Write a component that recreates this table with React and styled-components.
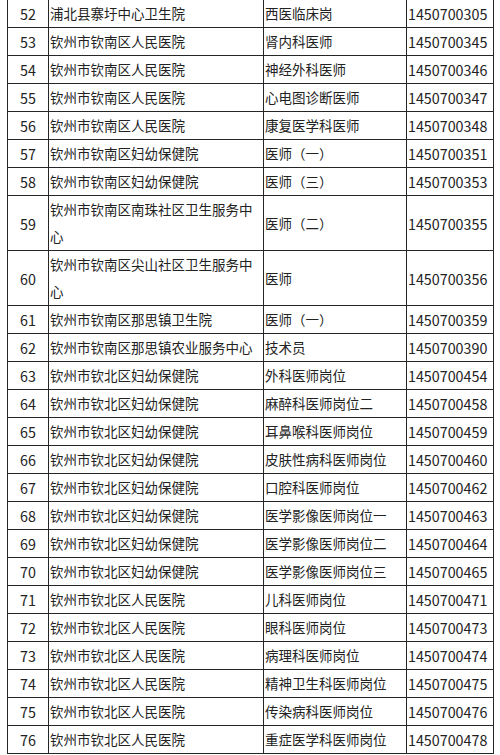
import React from "react";
import styled, { createGlobalStyle } from "styled-components";

const GlobalStyle = createGlobalStyle`
  html, body {
    margin: 0;
    padding: 0;
    background: #ffffff;
  }
  body {
    font-family: "Noto Sans CJK SC", "Noto Sans", sans-serif;
    color: #222222;
  }
`;

const Table = styled.table`
  margin-left: 7px;
  width: 486px;
  border-collapse: collapse;
  table-layout: fixed;
  font-size: 13.5px;
  line-height: 27px;
`;

const Col = styled.col`
  width: ${(p) => p.$w}px;
`;

const Row = styled.tr`
  &:first-child td {
    border-top: none;
  }
`;

const Cell = styled.td`
  border: 1px solid #262626;
  padding: 0 1px;
  vertical-align: middle;
  text-align: ${(p) => (p.$center ? "center" : "left")};
  font-size: ${(p) => (p.$num ? "14.3px" : "13.5px")};
  word-break: break-all;
`;

const rows = [
  ["52", "浦北县寨圩中心卫生院", "西医临床岗", "1450700305"],
  ["53", "钦州市钦南区人民医院", "肾内科医师", "1450700345"],
  ["54", "钦州市钦南区人民医院", "神经外科医师", "1450700346"],
  ["55", "钦州市钦南区人民医院", "心电图诊断医师", "1450700347"],
  ["56", "钦州市钦南区人民医院", "康复医学科医师", "1450700348"],
  ["57", "钦州市钦南区妇幼保健院", "医师（一）", "1450700351"],
  ["58", "钦州市钦南区妇幼保健院", "医师（三）", "1450700353"],
  ["59", "钦州市钦南区南珠社区卫生服务中心", "医师（二）", "1450700355"],
  ["60", "钦州市钦南区尖山社区卫生服务中心", "医师", "1450700356"],
  ["61", "钦州市钦南区那思镇卫生院", "医师（一）", "1450700359"],
  ["62", "钦州市钦南区那思镇农业服务中心", "技术员", "1450700390"],
  ["63", "钦州市钦北区妇幼保健院", "外科医师岗位", "1450700454"],
  ["64", "钦州市钦北区妇幼保健院", "麻醉科医师岗位二", "1450700458"],
  ["65", "钦州市钦北区妇幼保健院", "耳鼻喉科医师岗位", "1450700459"],
  ["66", "钦州市钦北区妇幼保健院", "皮肤性病科医师岗位", "1450700460"],
  ["67", "钦州市钦北区妇幼保健院", "口腔科医师岗位", "1450700462"],
  ["68", "钦州市钦北区妇幼保健院", "医学影像医师岗位一", "1450700463"],
  ["69", "钦州市钦北区妇幼保健院", "医学影像医师岗位二", "1450700464"],
  ["70", "钦州市钦北区妇幼保健院", "医学影像医师岗位三", "1450700465"],
  ["71", "钦州市钦北区人民医院", "儿科医师岗位", "1450700471"],
  ["72", "钦州市钦北区人民医院", "眼科医师岗位", "1450700473"],
  ["73", "钦州市钦北区人民医院", "病理科医师岗位", "1450700474"],
  ["74", "钦州市钦北区人民医院", "精神卫生科医师岗位", "1450700475"],
  ["75", "钦州市钦北区人民医院", "传染病科医师岗位", "1450700476"],
  ["76", "钦州市钦北区人民医院", "重症医学科医师岗位", "1450700478"],
];

const App = () => {
  return (
    <>
      <GlobalStyle />
      <Table>
        <colgroup>
          <Col $w={41} />
          <Col $w={215} />
          <Col $w={143} />
          <Col $w={87} />
        </colgroup>
        <tbody>
          {rows.map(([no, unit, post, code]) => (
            <Row key={no}>
              <Cell $center $num>
                {no}
              </Cell>
              <Cell>{unit}</Cell>
              <Cell>{post}</Cell>
              <Cell $num>{code}</Cell>
            </Row>
          ))}
        </tbody>
      </Table>
    </>
  );
};

export default App;
